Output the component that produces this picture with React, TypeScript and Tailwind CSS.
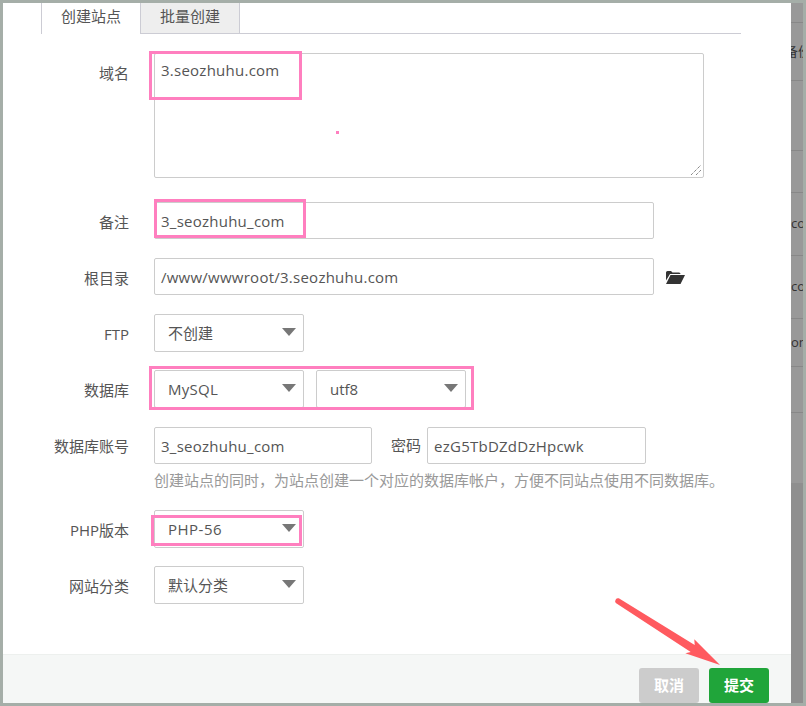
const field = 'border border-[#ccc] rounded-[2px] bg-white';

function Row({ label, children, className = '', labelClass = 'pt-[2px]' }: { label: string; children: React.ReactNode; className?: string; labelClass?: string }) {
  return (
    <div className={`flex items-center ${className}`}>
      <label className={`w-[126px] text-right text-[15px] text-[#555] mr-[25px] shrink-0 ${labelClass}`}>{label}</label>
      {children}
    </div>
  );
}

function Input({ value, width }: { value: string; width: string }) {
  return (
    <div className={`${field} ${width} h-[37px] px-[6px] pt-[1px] flex items-center text-[15px] tracking-[0.25px] text-[#555] shrink-0`}>
      {value}
    </div>
  );
}

function Select({ value, className = '', textClass = '' }: { value: string; className?: string; textClass?: string }) {
  return (
    <div className={`${field} w-[150px] h-[38px] pl-[13px] pr-[6px] flex items-center justify-between text-[15px] text-[#555] shrink-0 ${className}`}>
      <span className={textClass}>{value}</span>
      <svg width="14" height="8" viewBox="0 0 14 8" className="mr-[1px] mb-[2px]">
        <path d="M0 0h14L7 8z" fill="#777" />
      </svg>
    </div>
  );
}

// the page behind the dialog, mostly hidden by it
const backdropRows = [
  { h: 'h-[20px]', text: '' },
  { h: 'h-[58px]', text: '备份' },
  { h: 'h-[70px]', text: '' },
  { h: 'h-[42px]', text: '' },
  { h: 'h-[63px]', text: 'co' },
  { h: 'h-[63px]', text: 'co' },
  { h: 'h-[48px]', text: 'om' },
  { h: 'h-[46px]', text: '' },
];

export default function App() {
  return (
    <div className="relative w-[806px] h-[706px] overflow-hidden bg-[#a5aea8] flex pt-[3px] pl-[3px] pb-[3px] font-['Open_Sans','Noto_Sans_CJK_SC',sans-serif]">
      <div className="w-[788px] bg-white flex flex-col shrink-0">
        <div className="flex-1 pl-[38px]">
          <div className="flex w-[700px] h-[31px] border-b border-[#ccccd4] text-[15px] text-[#555]">
            <div className="w-[100px] h-[31px] pb-[5px] border-l border-r border-[#ccccd4] bg-white flex items-center justify-center">创建站点</div>
            <div className="w-[99px] h-[30px] pb-[4px] border-r border-[#ccccd4] bg-[#eee] flex items-center justify-center">批量创建</div>
          </div>
          <div className="-ml-[38px] pt-[19px] flex flex-col">
            <Row label="域名" className="items-start" labelClass="pt-[9px]">
              <div className="relative w-[550px] h-[125px] border border-[#ccc] rounded-[2px] px-[6px] pt-[5px] text-[15px] tracking-[0.25px] text-[#555]">
                3.seozhuhu.com
                <svg width="12" height="12" viewBox="0 0 12 12" className="absolute right-[1px] bottom-[1px]">
                  <path d="M1 11 11 1M6 11 11 6" stroke="#555" strokeWidth="1" strokeDasharray="1 1" />
                </svg>
              </div>
            </Row>
            <Row label="备注" className="mt-[24px]" labelClass="pt-[4px]">
              <Input value="3_seozhuhu_com" width="w-[500px]" />
            </Row>
            <Row label="根目录" className="mt-[19px]" labelClass="pt-[4px]">
              <Input value="/www/wwwroot/3.seozhuhu.com" width="w-[500px]" />
              <svg width="19" height="14" viewBox="0 0 19 14" className="ml-[12px]">
                <path d="M0 13V2.500Q0 1 1.500 1H5l1.500 1.500H13Q14.500 2.500 14.500 4H4L0 10.500ZM4.500 5H19L14.500 14H0Z" fill="#333" />
              </svg>
            </Row>
            <Row label="FTP" className="mt-[19px]">
              <Select value="不创建" />
            </Row>
            <Row label="数据库" className="mt-[18px]">
              <Select value="MySQL" textClass="tracking-[0.25px]" />
              <Select value="utf8" className="ml-[12px]" />
            </Row>
            <Row label="数据库账号" className="mt-[19px]">
              <Input value="3_seozhuhu_com" width="w-[218px]" />
              <span className="ml-[19px] mr-[6px] text-[15px] text-[#555]">密码</span>
              <Input value="ezG5TbDZdDzHpcwk" width="w-[219px]" />
            </Row>
            <p className="ml-[151px] mt-[6px] text-[15px] leading-[20px] text-[#999] whitespace-nowrap">
              创建站点的同时，为站点创建一个对应的数据库帐户，方便不同站点使用不同数据库。
            </p>
            <Row label="PHP版本" className="mt-[20px]">
              <Select value="PHP-56" textClass="tracking-[0.5px]" />
            </Row>
            <Row label="网站分类" className="mt-[18px]">
              <Select value="默认分类" />
            </Row>
          </div>
        </div>
        <div className="h-[49px] bg-[#f5f7f6] border-t border-[#edf0ee] flex justify-end items-start pt-[13px] pr-[22px] gap-[10px] text-[15px] font-bold text-white">
          <button className="w-[60px] h-[35px] rounded-[3px] bg-[#ccc]">取消</button>
          <button className="w-[60px] h-[35px] rounded-[3px] bg-[#20a53a]">提交</button>
        </div>
      </div>
      <div className="w-[12px] h-full bg-[#8f8f8f] overflow-hidden text-[13px] text-[#333] shrink-0 flex flex-col">
        {backdropRows.map((row, i) => (
          <div key={i} className={`${row.h} shrink-0 bg-[#999] border-b border-[#888] flex items-center whitespace-nowrap`}>
            {row.text && <span className={i === 1 ? '-ml-[6px]' : ''}>{row.text}</span>}
          </div>
        ))}
        <div className="h-[70px] shrink-0 bg-[#999]" />
      </div>

      {/* annotation boxes */}
      <div className="absolute left-[149px] top-[51px] w-[153px] h-[49px] border-[3px] border-[#ff7fbf]" />
      <div className="absolute left-[336px] top-[131px] w-[3px] h-[3px] bg-[#ff7fbf]" />
      <div className="absolute left-[154px] top-[199px] w-[152px] h-[39px] border-[3px] border-[#ff7fbf]" />
      <div className="absolute left-[149px] top-[366px] w-[325px] h-[44px] border-[3px] border-[#ff7fbf]" />
      <div className="absolute left-[151px] top-[515px] w-[151px] h-[31px] border-[3px] border-[#ff7fbf]" />
      <svg width="120" height="80" viewBox="0 0 120 80" className="absolute left-[610px] top-[595px]">
        <path d="M8.800 3.300 84.700 50 84.300 44.300 110 70 75.300 58.300 80.700 57 5.800 8.100A3 3 0 0 1 8.800 3.300Z" fill="#ff5a5f" />
      </svg>
    </div>
  );
}
